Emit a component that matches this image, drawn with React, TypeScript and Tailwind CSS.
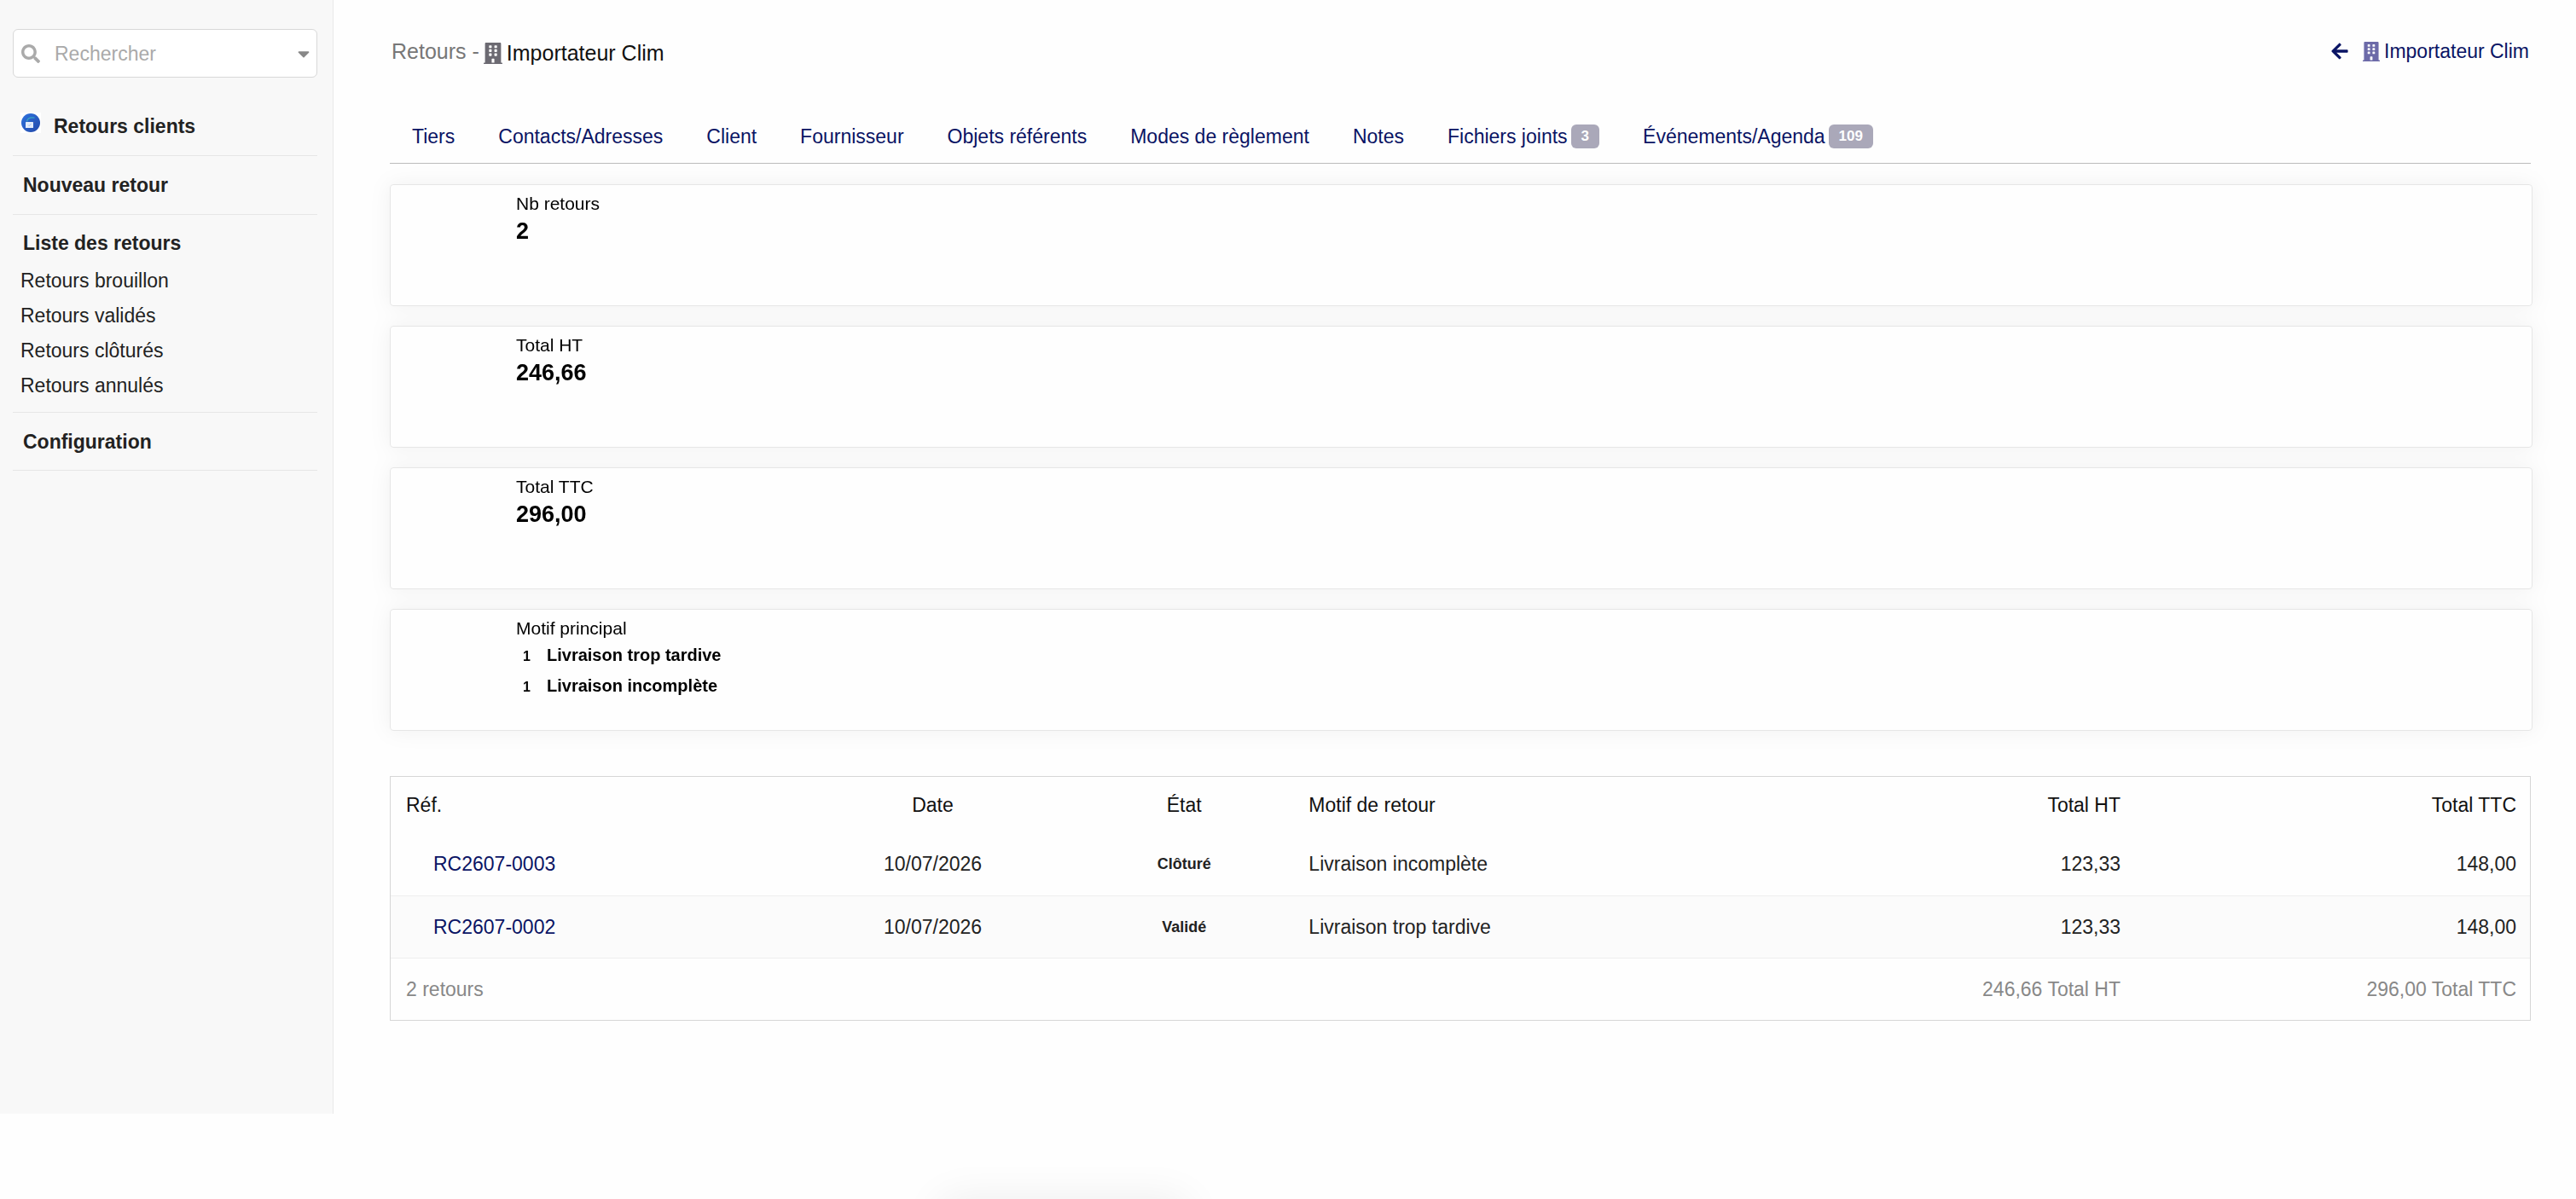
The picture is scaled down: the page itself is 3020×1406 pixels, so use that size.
import { clsx } from "clsx";
import { FaArrowLeft, FaBuilding, FaCaretDown, FaSearch } from "react-icons/fa";

const returnLinks = ["Retours brouillon", "Retours validés", "Retours clôturés", "Retours annulés"];

const tabs = [
  { label: "Tiers" },
  { label: "Contacts/Adresses" },
  { label: "Client" },
  { label: "Fournisseur" },
  { label: "Objets référents" },
  { label: "Modes de règlement" },
  { label: "Notes" },
  { label: "Fichiers joints", count: 3 },
  { label: "Événements/Agenda", count: 109 },
];

const stats = [
  { label: "Nb retours", value: "2" },
  { label: "Total HT", value: "246,66" },
  { label: "Total TTC", value: "296,00" },
];

const reasons = [
  { count: 1, label: "Livraison trop tardive" },
  { count: 1, label: "Livraison incomplète" },
];

const rows = [
  { ref: "RC2607-0003", date: "10/07/2026", status: "Clôturé", reason: "Livraison incomplète", ht: "123,33", ttc: "148,00" },
  { ref: "RC2607-0002", date: "10/07/2026", status: "Validé", reason: "Livraison trop tardive", ht: "123,33", ttc: "148,00" },
];

function ModuleIcon() {
  return (
    <svg viewBox="0 0 24 24" className="w-6 h-6 bg-white" aria-hidden="true">
      <defs>
        <linearGradient id="module" x1="0" y1="0" x2="1" y2="1">
          <stop offset="0" stopColor="#2f74e0" />
          <stop offset="1" stopColor="#2348a8" />
        </linearGradient>
      </defs>
      <circle cx="12" cy="12" r="11" fill="url(#module)" />
      <path d="M7.500 10.500C8 7 11 5.300 16.500 6.200" fill="none" stroke="#38a9c4" strokeWidth="1.300" />
      <rect x="6" y="11" width="9" height="7" rx="0.500" fill="#e3ecfb" />
      <path d="M9 14.500l1.200 1.200 2-2.400" fill="none" stroke="#8fb4ee" strokeWidth="0.800" />
      <circle cx="16.500" cy="11.500" r="0.600" fill="#6a5a8c" />
    </svg>
  );
}

function Sidebar() {
  return (
    <aside className="w-[391px] h-[calc(100vh-100px)] shrink-0 border-r border-[#e9e9e9] bg-[#f8f8f8] pl-[15px] pr-[18px] pt-[34px] text-[#222]">
      <div className="flex items-center h-[57px] rounded-md border border-[#d8d8d8] bg-white pl-[9px] pr-1">
        <FaSearch className="w-[22px] h-[22px] text-[#aaa]" />
        <select aria-label="Rechercher" className="flex-1 h-full appearance-none bg-transparent pl-[17px] text-[#aaa] outline-none">
          <option>Rechercher</option>
        </select>
        <FaCaretDown className="w-[22px] h-[22px] text-[#888]" />
      </div>

      <nav>
        <div className="flex h-[92px] gap-[15px] border-b border-[#e6e6e6] pt-[41px] pl-[9px]">
          <ModuleIcon />
          <a href="#retours" className="leading-8 font-bold">Retours clients</a>
        </div>
        <div className="flex items-center h-[69px] border-b border-[#e6e6e6] pl-3">
          <a href="#nouveau" className="font-bold">Nouveau retour</a>
        </div>
        <div className="border-b border-[#e6e6e6] pt-[17px] pb-[10px]">
          <a href="#liste" className="block pl-3 mb-2 leading-8 font-bold">Liste des retours</a>
          <ul className="pl-[9px]">
            {returnLinks.map((label) => (
              <li key={label} className="leading-[41px]">
                <a href="#liste">{label}</a>
              </li>
            ))}
          </ul>
        </div>
        <div className="flex items-center h-[68px] border-b border-[#e6e6e6] pl-3">
          <a href="#configuration" className="font-bold">Configuration</a>
        </div>
      </nav>
    </aside>
  );
}

function Card({ label, children }: { label: string; children: React.ReactNode }) {
  return (
    <section className="h-[143px] rounded-sm border border-[#e6e6e6] bg-[#fefefe] pt-2 pl-[147px] text-black">
      <h2 className="text-[21px] leading-7">{label}</h2>
      {children}
    </section>
  );
}

export default function App() {
  return (
    <div className="relative min-h-screen overflow-hidden flex items-start bg-[#fefefe] font-['Liberation_Sans',Arial,sans-serif] text-[23px] leading-8 text-[#222]">
      <Sidebar />

      <main className="flex-1 pl-[66px] pr-[53px] pt-11">
        {/* Title bar */}
        <header className="flex items-start justify-between h-9 px-[2px]">
          <h1 className="flex items-center text-[25px] leading-9 text-[#111]">
            <span className="text-[#777] leading-8 self-start">Retours -</span>
            <FaBuilding className="w-[22px] h-[25px] mx-[5px] text-[#6c6a72]" />
            <span>Importateur Clim</span>
          </h1>
          <div className="flex items-center gap-4 text-[#0a1464]">
            <a href="#retour" aria-label="Retour">
              <FaArrowLeft className="w-[22px] h-[22px]" />
            </a>
            <a href="#tiers" className="flex items-center gap-[5px]">
              <FaBuilding className="w-5 h-[23px] text-[#6c6aa8]" />
              Importateur Clim
            </a>
          </div>
        </header>

        <nav className="flex gap-[51px] mt-12 h-16 items-center border-b border-[#bbb] pl-[26px] text-[#0a1464]">
          {tabs.map((tab) => (
            <a key={tab.label} href="#onglet" className="flex items-center gap-1 whitespace-nowrap">
              {tab.label}
              {tab.count && (
                <span className="rounded-md bg-[#aaa8b9] px-3 text-[17px] leading-7 font-bold text-white">{tab.count}</span>
              )}
            </a>
          ))}
        </nav>

        {/* Summary cards */}
        <div className="-mr-[2px] mt-6 flex flex-col gap-[23px] drop-shadow-[0_0_12px_rgba(0,0,0,0.055)]">
          {stats.map((stat) => (
            <Card key={stat.label} label={stat.label}>
              <p className="text-[27px] leading-9 font-bold">{stat.value}</p>
            </Card>
          ))}
          <Card label="Motif principal">
            <ul className="font-bold text-[20px] leading-[34px]">
              {reasons.map((reason) => (
                <li key={reason.label} className="flex items-baseline">
                  <span className="w-9 pl-2 text-[16px]">{reason.count}</span>
                  {reason.label}
                </li>
              ))}
            </ul>
          </Card>
        </div>

        {/* Returns list */}
        <div className="mt-[53px] border border-[#d6d6d6]">
          <table className="w-full table-fixed border-collapse [&_td]:pl-[18px] [&_td]:pr-4 [&_th]:pl-[18px] [&_th]:pr-4 [&_th]:font-normal">
            <thead>
              <tr className="h-[66px] text-[#111]">
                <th className="w-[18.7%] text-left">Réf.</th>
                <th className="w-[13.2%]">Date</th>
                <th className="w-[10.3%]">État</th>
                <th className="text-left">Motif de retour</th>
                <th className="w-[19.6%] text-right">Total HT</th>
                <th className="w-[18.5%] text-right">Total TTC</th>
              </tr>
            </thead>
            <tbody>
              {rows.map((row, i) => (
                <tr key={row.ref} className={clsx("h-[73px] border-b border-[#eee]", i % 2 === 1 && "bg-[#fbfbfb]")}>
                  <td>
                    <a href="#fiche" className="pl-8 text-[#0a1464]">{row.ref}</a>
                  </td>
                  <td className="text-center">{row.date}</td>
                  <td className="text-center text-[18px] font-bold">{row.status}</td>
                  <td>{row.reason}</td>
                  <td className="text-right">{row.ht}</td>
                  <td className="text-right">{row.ttc}</td>
                </tr>
              ))}
            </tbody>
            <tfoot>
              <tr className="h-[73px] text-[#888]">
                <td colSpan={4}>2 retours</td>
                <td className="text-right">246,66 Total HT</td>
                <td className="text-right">296,00 Total TTC</td>
              </tr>
            </tfoot>
          </table>
        </div>
      </main>

      {/* Collapsed bottom panel, only its shadow shows */}
      <div className="absolute top-full left-[36.5%] w-[290px] h-20 rounded-xl shadow-[0_0_50px_rgba(0,0,0,0.07)]" />
    </div>
  );
}
